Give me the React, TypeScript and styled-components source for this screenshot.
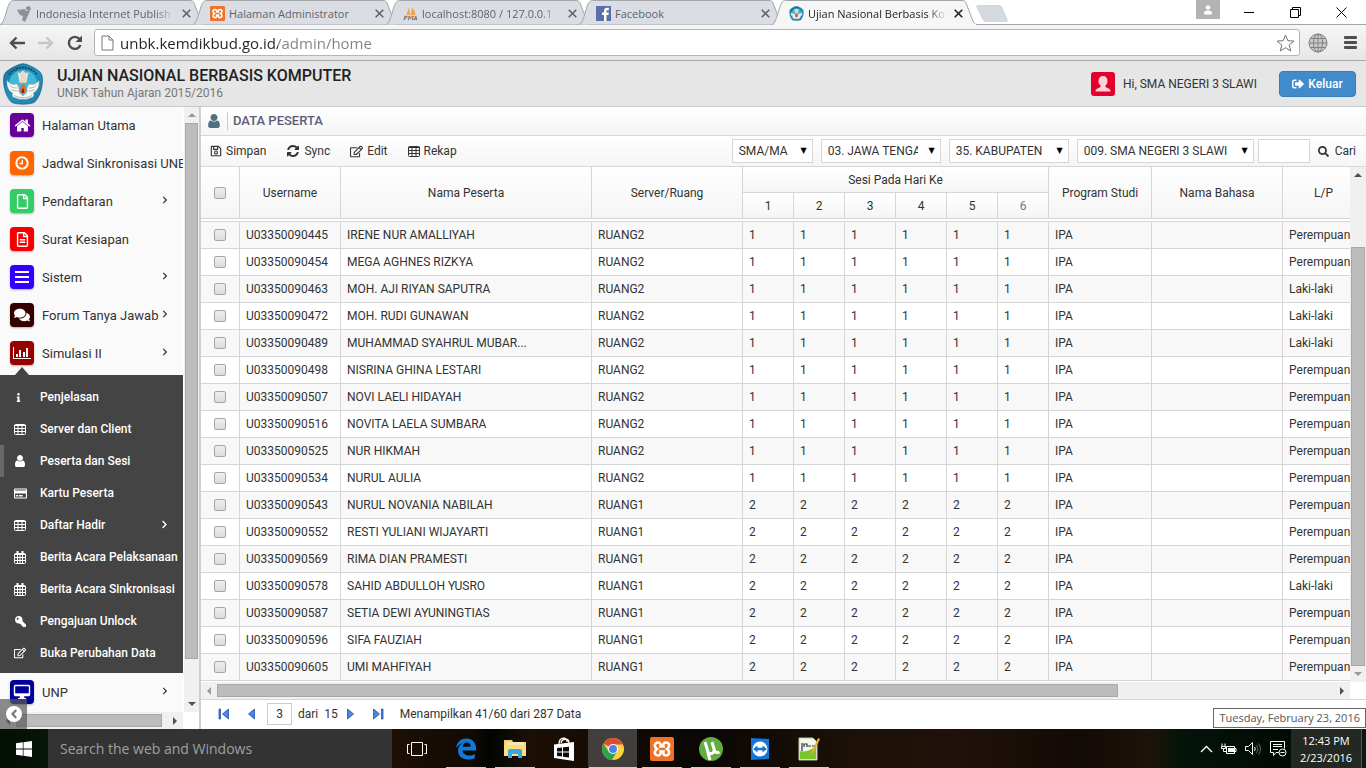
import React from "react";
import styled, { createGlobalStyle, css } from "styled-components";
import {
  FaAngleLeft,
  FaChevronRight,
  FaComments,
  FaInfo,
  FaKey,
  FaRegCreditCard,
  FaRegEdit,
  FaRegFile,
  FaRegFileAlt,
  FaRegSave,
  FaSearch,
  FaSignOutAlt,
} from "react-icons/fa";

const web = `Roboto, "Liberation Sans", sans-serif`;
const system = `"Open Sans", "Noto Sans", sans-serif`;
const line = "#d6d6d6";

const GlobalStyle = createGlobalStyle`
  *, *::before, *::after { box-sizing: border-box; }
  body { margin: 0; background: #fff; color: #333; font: 12px/16px ${web}; }
  button, input, select { font: inherit; color: inherit; margin: 0; padding: 0; border: 0; background: none; border-radius: 0; }
  button { cursor: pointer; }
  ul { list-style: none; margin: 0; padding: 0; }
  a { color: inherit; text-decoration: none; }
  h1, h2, p { margin: 0; }
  svg { display: block; flex: none; }
`;

/* ---------- glyphs ---------- */

type GlyphProps = { size?: number };

const HomeGlyph = ({ size = 16 }: GlyphProps) => (
  <svg width={size} height={size} viewBox="0 0 1792 1792" fill="currentColor">
    <path d="M1472 992v480q0 26-19 45t-45 19h-384v-384h-256v384h-384q-26 0-45-19t-19-45v-480q0-1 .5-3t.5-3l575-474 575 474q1 2 1 6zm223-69l-62 74q-8 9-21 11h-3q-13 0-21-7l-692-577-692 577q-12 8-24 7-13-2-21-11l-62-74q-8-10-7-23.5t11-21.5l719-599q32-26 76-26t76 26l244 204v-195q0-14 9-23t23-9h192q14 0 23 9t9 23v408l219 182q10 8 11 21.5t-7 23.5z" />
  </svg>
);

const UserGlyph = ({ size = 12 }: GlyphProps) => (
  <svg width={size} height={size} viewBox="128 128 1536 1536" fill="currentColor">
    <path d="M1536 1399q0 109-62.5 187t-150.5 78h-854q-88 0-150.5-78t-62.5-187q0-85 8.5-160.5t31.5-152 58.5-131 94-89 134.5-34.5q131 128 313 128t313-128q76 0 134.5 34.5t94 89 58.5 131 31.5 152 8.5 160.5zm-256-887q0 159-112.5 271.5t-271.5 112.5-271.5-112.5-112.5-271.5 112.5-271.5 271.5-112.5 271.5 112.5 112.5 271.5z" />
  </svg>
);

const RefreshGlyph = ({ size = 14 }: GlyphProps) => (
  <svg width={size} height={size} viewBox="0 0 1792 1792" fill="currentColor">
    <path d="M1639 1056q0 5-1 7-64 268-268 434.5t-478 166.5q-146 0-282.5-55t-243.5-157l-129 129q-19 19-45 19t-45-19-19-45v-448q0-26 19-45t45-19h448q26 0 45 19t19 45-19 45l-137 137q71 66 161 102t187 36q134 0 250-65t186-179q11-17 53-117 8-23 30-23h192q13 0 22.5 9.5t9.5 22.5zm25-800v448q0 26-19 45t-45 19h-448q-26 0-45-19t-19-45 19-45l138-138q-148-137-349-137-134 0-250 65t-186 179q-11 17-53 117-8 23-30 23h-199q-13 0-22.5-9.5t-9.5-22.5v-7q65-268 270-434.5t480-166.5q146 0 284 55.5t245 156.5l130-129q19-19 45-19t45 19 19 45z" />
  </svg>
);

const TableGlyph = () => (
  <svg width="12" height="11" viewBox="0 0 12 11" fill="none" stroke="currentColor">
    <rect x=".5" y=".5" width="11" height="10" rx="1" />
    <path d="M0 1.5h12M0 4.5h12M0 7.5h12M4 1v10M8 1v10" />
  </svg>
);

const CalendarGlyph = () => (
  <svg width="12" height="13" viewBox="0 0 12 13" fill="none" stroke="currentColor">
    <rect x=".5" y="2.5" width="11" height="10" rx="1" />
    <path d="M0 3.500h12M0 6.500h12M0 9.500h12M3.500 4v9M6 4v9M8.500 4v9" />
    <path d="M3.500 0v3M8.500 0v3" strokeWidth="2" />
  </svg>
);

const ClockGlyph = () => (
  <svg width="16" height="16" viewBox="0 0 16 16" fill="none" stroke="currentColor">
    <circle cx="8" cy="8" r="5.7" strokeWidth="2" />
    <path d="M8.3 5v3.500H5.500" strokeWidth="1.3" />
  </svg>
);

const BarsGlyph = () => (
  <svg width="16" height="12" viewBox="0 0 16 12" fill="currentColor">
    <path d="M1 0h14v2H1zM1 5h14v2H1zM1 10h14v2H1z" />
  </svg>
);

const ChartGlyph = () => (
  <svg width="18" height="14" viewBox="0 0 18 14" fill="currentColor">
    <path d="M0 1h1v11h17v1H0zM3 8h2v3H3zM6 4h2v7H6zM10 6h2v5h-2zM13 2h2v9h-2z" />
  </svg>
);

const DesktopGlyph = () => (
  <svg width="18" height="16" viewBox="0 0 18 16" fill="none" stroke="currentColor">
    <rect x="1.500" y="1.500" width="15" height="10" rx="1" strokeWidth="1.4" />
    <path d="M2 10.500h14" strokeWidth="2.4" />
    <path d="M7 12h4l.5 2H13v1H5v-1h1.500z" fill="currentColor" stroke="none" />
  </svg>
);

const MinistryLogo = ({ size }: { size: number }) => (
  <svg width={size} height={size} viewBox="0 0 42 42">
    <defs>
      <linearGradient id="crest" x1="0" y1="0" x2="1" y2="1">
        <stop offset="0" stopColor="#1c6f96" />
        <stop offset=".5" stopColor="#2391bd" />
        <stop offset="1" stopColor="#1c7fae" />
      </linearGradient>
    </defs>
    <path d="M21 .7c4 0 14 5 17.500 8.800 2.500 3.500 2.500 9 1 16-1.500 6-4 11.500-7.500 14-5 2.200-17 2.200-22 0-3.500-2.500-6-8-7.500-14-1.500-7-1.500-12.500 1-16C7 5.700 17 .7 21 .7z" fill="url(#crest)" stroke="#1a6488" strokeWidth=".7" />
    <path d="M7 11.500C11 6.500 16 4.500 21 4.500S31 6.500 35 11.500" fill="none" stroke="#123f58" strokeWidth="1.500" strokeDasharray="2 1" />
    <circle cx="21" cy="21" r="14" fill="#3fb9d8" />
    <path d="M15.500 9l2.500 1 3-2.500 3 2.500 2.500-1L24.500 20h-7z" fill="#f3efe7" stroke="#a99c8a" strokeWidth=".5" />
    <path d="M19 10v10M21 9v11M23 10v10" stroke="#c0a99a" strokeWidth=".6" />
    <path d="M5 17.500c3 4 6.500 4.500 10 3.500l2 4 0 4 4 4 4-4 0-4 2-4c3.500 1 7 .5 10-3.500.5 6-1.500 10.500-6 12.500 1 1 1 2 0 4-3 1-6 2.500-10 2.500s-7-1.500-10-2.500c-1-2-1-3 0-4-4.500-2-6.500-6.500-6-12.500z" fill="#fbf8f2" stroke="#8fa3a8" strokeWidth=".5" />
    <path d="M7.500 22c2 2.500 4.500 3 7.500 3M9.500 26.500c2 1.500 4 1.500 6 1.500M34.500 22c-2 2.500-4.500 3-7.500 3M32.500 26.500c-2 1.500-4 1.500-6 1.500M12 32.500c6 3 12 3 18 0M16 37c3-1 7-1 10 0" fill="none" stroke="#8d9a9a" strokeWidth=".7" />
    <path d="M21 21c3 3 3.500 6 2 9h-4c-1.500-3-1-6 2-9z" fill="#e96a1e" />
    <path d="M21 25c1 1.500 1.500 3 .5 5h-1.500c-.5-2 0-3.500 1-5z" fill="#7c1d12" />
  </svg>
);

const XamppLogo = ({ size }: { size: number }) => (
  <svg width={size} height={size} viewBox="0 0 24 24">
    <rect width="24" height="24" rx="2" fill="#ef7125" />
    <path d="M8 5.500c2.500 0 3 2 2.500 4h3C13 7.500 13.500 5.500 16 5.500s3.500 2 3 3.800c-.3 1.300-1 2-2 2.700 1 .7 1.700 1.400 2 2.700.5 1.800-.5 3.800-3 3.800s-3-2-2.500-4h-3c.5 2 0 4-2.500 4s-3.500-2-3-3.800c.3-1.300 1-2 2-2.700-1-.7-1.700-1.400-2-2.700-.5-1.800.5-3.800 3-3.800z" fill="none" stroke="#fff" strokeWidth="2.600" />
  </svg>
);

const Caret = ({ dir, color = "#505050" }: { dir: "up" | "down" | "left" | "right"; color?: string }) => {
  const d = { up: "M1 7l4-4 4 4z", down: "M1 3l4 4 4-4z", left: "M7 1L3 5l4 4z", right: "M3 1l4 4-4 4z" }[dir];
  return (
    <svg width="10" height="10" viewBox="0 0 10 10">
      <path d={d} fill={color} />
    </svg>
  );
};

/* ---------- browser chrome ---------- */

const Screen = styled.div`
  min-height: 100vh;
  display: flex;
  flex-direction: column;
  overflow: hidden;
`;

const TabStrip = styled.div`
  display: flex;
  height: 25px;
  padding: 0 2px 0 3px;
  background: #fff;
  border-bottom: 1px solid #a3a5a8;
  font: 11px/16px ${system};
`;

const Tabs = styled.ul`
  display: flex;
`;

const TabItem = styled.li<{ $active?: boolean }>`
  position: relative;
  width: 193px;
  height: 25px;
  display: flex;
  align-items: center;
  gap: 4px;
  padding: 2px 3px 0 14px;
  color: ${(p) => (p.$active ? "#222" : "#5f6368")};
  z-index: ${(p) => (p.$active ? 2 : 1)};
`;

const TabShape = styled.svg`
  position: absolute;
  left: -3px;
  top: 0;
  z-index: -1;
`;

const TabTitle = styled.a<{ $fade?: boolean }>`
  flex: 1;
  min-width: 0;
  overflow: hidden;
  white-space: nowrap;
  ${(p) => p.$fade && css`mask-image: linear-gradient(to right, #000 86%, transparent 100%);`}
`;

const TabClose = styled.button`
  width: 14px;
  height: 14px;
  display: grid;
  place-items: center;
  color: inherit;
`;

const NewTab = styled.button`
  margin: 5px 0 0 8px;
  width: 32px;
  height: 17px;
`;

const WindowControls = styled.div`
  margin-left: auto;
  display: flex;
`;

const ProfileButton = styled.button`
  width: 24px;
  height: 19px;
  display: grid;
  place-items: center;
  background: #b3b3b3;
  color: #fff;
  margin-right: 6px;
`;

const WindowButton = styled.button`
  width: 46px;
  height: 24px;
  display: grid;
  place-items: center;
`;

const AddressBar = styled.div`
  display: flex;
  align-items: center;
  height: 36px;
  padding: 0 8px 0 2px;
  background: linear-gradient(#f6f6f6, #e6e6e6);
  border-bottom: 1px solid #a9a9a9;
`;

const ToolButton = styled.button`
  width: 29px;
  height: 24px;
  display: grid;
  place-items: center;
`;

const Omnibox = styled.label`
  flex: 1;
  display: flex;
  align-items: center;
  gap: 6px;
  height: 27px;
  margin-left: 5px;
  padding: 0 4px 0 6px;
  background: #fff;
  border: 1px solid #b5b5b5;
  border-radius: 3px;
`;

const UrlInput = styled.input`
  flex: 1;
  min-width: 0;
  height: 24px;
  font: 15px/24px ${system};
  background: linear-gradient(to right, #222 158px, #808080 158px);
  background-clip: text;
  -webkit-text-fill-color: transparent;
  outline: none;
`;

const ChromeActions = styled.div`
  display: flex;
  align-items: center;
  gap: 16px;
  padding-left: 8px;
`;

const tabs = [
  { title: "Indonesia Internet Publish", icon: "publisher", fade: true },
  { title: "Halaman Administrator", icon: "xampp" },
  { title: "localhost:8080 / 127.0.0.1", icon: "pma", fade: true },
  { title: "Facebook", icon: "facebook" },
  { title: "Ujian Nasional Berbasis Ko", icon: "crest", active: true, fade: true },
];

const Favicon = ({ kind }: { kind: string }) => {
  if (kind === "xampp") return <XamppLogo size={15} />;
  if (kind === "crest") return <MinistryLogo size={15} />;
  if (kind === "facebook")
    return (
      <svg width="15" height="15" viewBox="0 0 15 15">
        <path d="M0 0h15v15H0z" fill="#5b6fa8" />
        <path d="M8 15V9H6V6.500h2V5c0-2.200 1.200-3.300 3.200-3.300h1.600v2.500h-1.300c-.8 0-1 .4-1 1.100v1.200h2.300L12.500 9h-2v6z" fill="#fff" />
      </svg>
    );
  if (kind === "pma")
    return (
      <svg width="15" height="16" viewBox="0 0 17 16">
        <path d="M4 9C5 6 6 3 6.500 1 8 4 8 7 7.500 9zM8.500 9C9.500 6 10 3 10 1c3 2 4 5 4 8zM1 10h15l-1 1.500H2z" fill="#f5a04c" />
        <path d="M1 15l1-4h2q1 1-.5 2H1.600M6 15l1-4 1.500 2.500L11 11v4M12 15l2.500-4 1 4M13 14h2.500" fill="none" stroke="#55628c" />
      </svg>
    );
  return (
    <svg width="15" height="16" viewBox="0 0 15 16" fill="#8e9094">
      <path d="M0 4l8-1 1 2 4 0-5 11-3-2 1-4-3-1zM9 1l4-1 1 4-3 1-2-2z" />
    </svg>
  );
};

const Browser = () => (
  <header>
    <TabStrip>
      <Tabs>
        {tabs.map((t) => (
          <TabItem key={t.title} $active={t.active}>
            <TabShape width="206" height="25" viewBox="0 0 206 25">
              <path
                d="M0 24.500C5 24.500 7 3 11 1.500 12 .5 13 .5 15 .5H189C192 .5 193 1 194 3L201 21C202 24 204 24.500 206 24.500"
                fill={t.active ? "#f6f6f6" : "#dadee4"}
                stroke="#a3a5a8"
              />
              {t.active && <path d="M2 24.500h202" stroke="#f6f6f6" strokeWidth="1.500" />}
            </TabShape>
            <Favicon kind={t.icon} />
            <TabTitle href="#" $fade={t.fade}>{t.title}</TabTitle>
            <TabClose aria-label="Close tab">
              <svg width="9" height="9" viewBox="0 0 9 9" stroke="currentColor" strokeWidth="1.600">
                <path d="M.7.7l7.600 7.600M8.300.7L.7 8.300" />
              </svg>
            </TabClose>
          </TabItem>
        ))}
      </Tabs>
      <NewTab aria-label="New tab">
        <svg width="32" height="17" viewBox="0 0 32 17">
          <path d="M1 .5h22q2 0 3 2l5 12q1 2-1 2H10q-2 0-3-2L1 2.500q-1-2 0-2z" fill="#d5dae1" stroke="#c3c7cd" strokeWidth=".6" />
        </svg>
      </NewTab>
      <WindowControls>
        <ProfileButton aria-label="Profile">
          <svg width="10" height="10" viewBox="0 0 10 10" fill="currentColor">
            <circle cx="5" cy="2.500" r="2.300" />
            <path d="M1 9.500V8q0-2.500 4-2.500T9 8v1.500z" />
          </svg>
        </ProfileButton>
        <WindowButton aria-label="Minimize">
          <svg width="10" height="10" stroke="#000"><path d="M0 5.500h10" /></svg>
        </WindowButton>
        <WindowButton aria-label="Restore">
          <svg width="11" height="11" fill="none" stroke="#000"><path d="M.5 2.500h8v8h-8zM2.500 2.500v-2h8v8h-2" /></svg>
        </WindowButton>
        <WindowButton aria-label="Close">
          <svg width="11" height="11" stroke="#000"><path d="M.5.5l10 10M10.500.5l-10 10" /></svg>
        </WindowButton>
      </WindowControls>
    </TabStrip>
    <AddressBar>
      <ToolButton aria-label="Back">
        <svg width="16" height="14" viewBox="0 0 16 14" fill="none" stroke="#4d4d4d" strokeWidth="2.400"><path d="M7.500 1.500L2 7l5.500 5.500M2 7h14" /></svg>
      </ToolButton>
      <ToolButton aria-label="Forward">
        <svg width="16" height="14" viewBox="0 0 16 14" fill="none" stroke="#c6c6c6" strokeWidth="2.400"><path d="M8.500 1.500L14 7l-5.500 5.500M14 7H0" /></svg>
      </ToolButton>
      <ToolButton aria-label="Reload">
        <svg width="16" height="16" viewBox="0 0 16 16" fill="none" stroke="#4d4d4d" strokeWidth="2.400"><path d="M13.500 10A6 6 0 1 1 12.500 4" /><path d="M15 .5v6.500H8.500z" fill="#4d4d4d" stroke="none" /></svg>
      </ToolButton>
      <Omnibox>
        <svg width="13" height="16" viewBox="0 0 13 16" fill="#fff" stroke="#777"><path d="M1 1h7l4 4v10H1zM8 1v4h4" /></svg>
        <UrlInput aria-label="Address" defaultValue="unbk.kemdikbud.go.id/admin/home" />
        <svg width="19" height="18" viewBox="0 0 19 18" fill="#fff" stroke="#707070"><path d="M9.500 1l2.300 5.700 6.200.4-4.800 3.900 1.600 6-5.300-3.300L4.200 17l1.600-6L1 7.100l6.200-.4z" /></svg>
      </Omnibox>
      <ChromeActions>
        <button aria-label="Extension">
          <svg width="20" height="20" viewBox="0 0 20 20" fill="#c9c9c9" stroke="#808080"><circle cx="10" cy="10" r="9" /><ellipse cx="10" cy="10" rx="4.500" ry="9" fill="none" /><path d="M10 1v18M1 10h18M2.500 5.500h15M2.500 14.500h15" /></svg>
        </button>
        <button aria-label="Menu">
          <svg width="14" height="14" fill="#4f4f4f"><rect y="0" width="13" height="3" rx="1" /><rect y="5" width="13" height="3" rx="1" /><rect y="10" width="13" height="3" rx="1" /></svg>
        </button>
      </ChromeActions>
    </AddressBar>
  </header>
);

/* ---------- site header ---------- */

const SiteHeader = styled.header`
  display: flex;
  align-items: center;
  height: 46px;
  padding: 0 10px 0 2px;
  background: #e6e6e6;
  border-bottom: 1px solid #c6c9ca;
`;

const Brand = styled.div`
  margin-left: 13px;
`;

const BrandTitle = styled.h1`
  font-size: 16px;
  line-height: 18px;
  font-weight: 500;
  color: #222;
`;

const BrandSub = styled.p`
  font-size: 12px;
  line-height: 16px;
  color: #777;
`;

const Account = styled.div`
  margin-left: auto;
  display: flex;
  align-items: center;
  gap: 8px;
`;

const Avatar = styled.span`
  width: 24px;
  height: 24px;
  display: grid;
  place-items: center;
  border-radius: 3px;
  background: #e4002b;
  color: #ffd3da;
`;

const Logout = styled.button`
  display: flex;
  align-items: center;
  justify-content: center;
  gap: 4px;
  width: 77px;
  height: 26px;
  margin-left: 14px;
  border-radius: 4px;
  border: 1px solid #357ebd;
  background: #428bca;
  color: #fff;
  font-weight: 500;
`;

/* ---------- sidebar ---------- */

const Workspace = styled.div`
  flex: 1;
  display: flex;
`;

const Sidebar = styled.aside`
  position: relative;
  width: 201px;
  flex: none;
  display: flex;
  flex-direction: column;
  background: #fff;
  border-right: 2px solid #cfcfcf;
`;

const SidebarBody = styled.div`
  flex: 1;
  display: flex;
`;

const Nav = styled.nav`
  width: 183px;
  overflow: hidden;
  background: #fafafa;
  font-size: 13px;
`;

const NavLink = styled.a`
  position: relative;
  display: flex;
  align-items: center;
  height: 38px;
  padding-left: 10px;
  white-space: nowrap;
`;

const NavIcon = styled.span<{ $color: string }>`
  flex: none;
  width: 24px;
  height: 24px;
  margin: 0 8px 2px 0;
  display: grid;
  place-items: center;
  border-radius: 4px;
  background: ${(p) => p.$color};
  box-shadow: 0 1px 2px rgba(0, 0, 0, 0.3);
  color: #fff;
`;

const Expand = styled.span<{ $light?: boolean }>`
  position: absolute;
  right: 14px;
  top: ${(p) => (p.$light ? 11 : 13)}px;
  color: ${(p) => (p.$light ? "#fff" : "#333")};
`;

const SubMenu = styled.ul`
  position: relative;
  margin: 2px 0 1px;
  padding: 6px 0 4px;
  background: #444;
  color: #fff;
  font-size: 12px;
  font-weight: 500;
`;

const SubPointer = styled.span`
  position: absolute;
  left: 15px;
  top: -8px;
  border: 7px solid transparent;
  border-top: 0;
  border-bottom: 8px solid #444;
`;

const SubLink = styled.a<{ $current?: boolean }>`
  position: relative;
  display: flex;
  align-items: center;
  height: 32px;
  padding-left: 10px;
  white-space: nowrap;
  border-left: 4px solid ${(p) => (p.$current ? "#696969" : "#444")};
`;

const SubIcon = styled.span`
  width: 26px;
  flex: none;
`;

const Mirror = styled.span`
  display: block;
  width: 12px;
  transform: scaleX(-1);
`;

const CollapseButton = styled.button`
  position: absolute;
  left: 0;
  bottom: 0;
  width: 27px;
  height: 30px;
  padding-left: 6px;
  background: rgba(90, 90, 90, 0.7);
`;

const CollapseDot = styled.span`
  width: 16px;
  height: 16px;
  border-radius: 50%;
  background: #fff;
  color: #777;
  display: grid;
  place-items: center;
`;

/* ---------- scroll bars ---------- */

const Track = styled.div<{ $vertical?: boolean }>`
  display: flex;
  background: #f0f0f0;
  ${(p) =>
    p.$vertical
      ? css`
          flex-direction: column;
          width: 16px;
          padding: 0 1px;
        `
      : css`
          height: 17px;
          padding: 2px 0;
        `}
`;

const Arrow = styled.span`
  flex: none;
  display: grid;
  place-items: center;
  min-width: 16px;
  min-height: 12px;
`;

const Thumb = styled.span<{ $grow: number }>`
  flex: ${(p) => p.$grow} 1 0;
  background: #bcbcbc;
  border: 1px solid #a8a8a8;
`;

const Rest = styled.span<{ $grow: number }>`
  flex: ${(p) => p.$grow} 1 0;
`;

const UprightArrow = styled(Arrow)`
  min-width: 12px;
  min-height: 16px;
`;

const SideTrack = styled(Track)`
  margin-left: 1px;
  width: 15px;
`;

const SideFoot = styled(Track)`
  width: 183px;
  height: 17px;
`;

type NavEntry = { label: string; color: string; icon: React.ReactNode; more?: boolean };

const mainNav: NavEntry[] = [
  { label: "Halaman Utama", color: "#660099", icon: <HomeGlyph size={17} /> },
  { label: "Jadwal Sinkronisasi UNBK", color: "#ff6600", icon: <ClockGlyph /> },
  { label: "Pendaftaran", color: "#33cc66", icon: <FaRegFile size={15} />, more: true },
  { label: "Surat Kesiapan", color: "#f40000", icon: <FaRegFileAlt size={15} /> },
  { label: "Sistem", color: "#3300ff", icon: <BarsGlyph />, more: true },
  { label: "Forum Tanya Jawab", color: "#330000", icon: <FaComments size={16} />, more: true },
  { label: "Simulasi II", color: "#990000", icon: <ChartGlyph />, more: true },
];

const subNav = [
  { label: "Penjelasan", icon: <FaInfo size={9} /> },
  { label: "Server dan Client", icon: <TableGlyph /> },
  { label: "Peserta dan Sesi", icon: <UserGlyph size={12} />, current: true },
  { label: "Kartu Peserta", icon: <FaRegCreditCard size={13} /> },
  { label: "Daftar Hadir", icon: <TableGlyph />, more: true },
  { label: "Berita Acara Pelaksanaan", icon: <CalendarGlyph /> },
  { label: "Berita Acara Sinkronisasi", icon: <CalendarGlyph /> },
  { label: "Pengajuan Unlock", icon: <Mirror><FaKey size={11} /></Mirror> },
  { label: "Buka Perubahan Data", icon: <FaRegEdit size={12} /> },
];

const NavItem = ({ label, color, icon, more }: NavEntry) => (
  <NavLink href="#">
    <NavIcon $color={color}>{icon}</NavIcon>
    {label}
    {more && <Expand><FaChevronRight size={8} /></Expand>}
  </NavLink>
);

const Side = () => (
  <Sidebar>
    <SidebarBody>
      <Nav>
        {mainNav.map((n) => <NavItem key={n.label} {...n} />)}
        <SubMenu>
          <SubPointer />
          {subNav.map((s) => (
            <li key={s.label}>
              <SubLink href="#" $current={s.current}>
                <SubIcon>{s.icon}</SubIcon>
                {s.label}
                {s.more && <Expand $light><FaChevronRight size={9} /></Expand>}
              </SubLink>
            </li>
          ))}
        </SubMenu>
        <NavItem label="UNP" color="#000099" icon={<DesktopGlyph />} more />
      </Nav>
      <SideTrack $vertical>
        <UprightArrow><Caret dir="up" color="#999" /></UprightArrow>
        <Thumb $grow={535} />
        <Rest $grow={37} />
        <UprightArrow><Caret dir="down" /></UprightArrow>
      </SideTrack>
    </SidebarBody>
    <SideFoot>
      <Arrow><Caret dir="left" /></Arrow>
      <Thumb $grow={146} />
      <Rest $grow={5} />
      <Arrow><Caret dir="right" /></Arrow>
    </SideFoot>
    <CollapseButton aria-label="Collapse menu">
      <CollapseDot><FaAngleLeft size={14} /></CollapseDot>
    </CollapseButton>
  </Sidebar>
);

/* ---------- data panel ---------- */

const Panel = styled.main`
  flex: 1;
  min-width: 0;
  display: flex;
  flex-direction: column;
`;

const PanelTitle = styled.div`
  display: flex;
  align-items: center;
  gap: 6px;
  height: 29px;
  padding-left: 6px;
  background: linear-gradient(#fff, #f5f5f5);
  border-bottom: 1px solid ${line};
  color: #4f7080;
`;

const PanelHeading = styled.h2`
  padding-left: 5px;
  border-left: 1px solid #ccc;
  font-size: 13px;
  line-height: 18px;
  font-weight: 500;
  color: #5d5d78;
`;

const ActionBar = styled.div`
  display: flex;
  align-items: center;
  height: 31px;
  padding: 0 10px 0 9px;
  background: linear-gradient(#fff, #f5f5f5);
  border-bottom: 1px solid ${line};
`;

const Actions = styled.div`
  display: flex;
  gap: 20px;
`;

const Action = styled.button`
  display: flex;
  align-items: center;
  gap: 4px;
`;

const Filters = styled.form`
  margin-left: auto;
  display: flex;
  align-items: center;
  gap: 8px;
`;

const SubmitAction = styled(Action)`
  gap: 6px;
`;

const SelectBox = styled.label<{ $width: number }>`
  position: relative;
  width: ${(p) => p.$width}px;
  height: 24px;
  background: #fff;
  border: 1px solid ${line};

  &::after {
    content: "▼";
    position: absolute;
    right: 5px;
    top: 3px;
    font: 8px/16px "DejaVu Sans", sans-serif;
    color: #000;
    pointer-events: none;
  }
`;

const Select = styled.select`
  appearance: none;
  width: calc(100% - 22px);
  height: 22px;
  padding: 0 0 0 6px;
  outline: none;
`;

const SearchInput = styled.input`
  width: 52px;
  height: 24px;
  margin-left: -4px;
  padding: 0 4px;
  background: #fff;
  border: 1px solid ${line};
`;

const GridArea = styled.div`
  flex: 1;
  display: flex;
`;

const GridMain = styled.div`
  flex: 1;
  min-width: 0;
  display: flex;
  flex-direction: column;
`;

const GridClip = styled.div`
  flex: 1;
  overflow: hidden;
`;

const Grid = styled.table`
  table-layout: fixed;
  width: 1182px;
  border-collapse: separate;
  border-spacing: 0;
`;

const Th = styled.th<{ $muted?: boolean }>`
  height: 26px;
  padding: 0;
  font-weight: 400;
  color: ${(p) => (p.$muted ? "#777" : "#333")};
  background: linear-gradient(#fff, #f5f5f5);
  border-right: 1px solid ${line};
  border-bottom: 1px solid ${line};
`;

const SpacerCell = styled.td`
  height: 3px;
  padding: 0;
  border-bottom: 1px solid ${line};
`;

const Tr = styled.tr`
  background: #fff;
  &:nth-child(even) {
    background: #f8f8f8;
  }
`;

const Td = styled.td<{ $center?: boolean }>`
  height: 27px;
  padding: ${(p) => (p.$center ? "0 0 1px" : "0 6px")};
  text-align: ${(p) => (p.$center ? "center" : "left")};
  border-right: 1px solid ${line};
  border-bottom: 1px solid ${line};
  overflow: hidden;
  white-space: nowrap;
  text-overflow: ellipsis;
`;

const Check = styled.input`
  appearance: none;
  display: block;
  width: 12px;
  height: 12px;
  margin: 0 auto;
  border: 1px solid #a6a6a6;
  border-radius: 2px;
  background: linear-gradient(#eee, #dcdcdc);
`;

const LpLabel = styled.span`
  display: block;
  width: 81px;
`;

const GridScroll = styled(Track)`
  margin-bottom: 17px;
`;

const Pager = styled.div`
  display: flex;
  align-items: center;
  height: 30px;
  padding: 0 0 1px 17px;
  border-top: 1px solid ${line};
  background: #fff;
`;

const PageButton = styled.button<{ $tight?: boolean }>`
  width: ${(p) => (p.$tight ? 21 : 28)}px;
  height: 20px;
  display: grid;
  place-items: center start;
`;

const PageInput = styled.input`
  width: 25px;
  height: 22px;
  margin-right: 6px;
  border: 1px solid #ccc;
  text-align: center;
`;

const PageText = styled.span`
  margin-right: 6px;
`;

const people: [string, string, string?][] = [
  ["445", "IRENE NUR AMALLIYAH"],
  ["454", "MEGA AGHNES RIZKYA"],
  ["463", "MOH. AJI RIYAN SAPUTRA", "L"],
  ["472", "MOH. RUDI GUNAWAN", "L"],
  ["489", "MUHAMMAD SYAHRUL MUBAR...", "L"],
  ["498", "NISRINA GHINA LESTARI"],
  ["507", "NOVI LAELI HIDAYAH"],
  ["516", "NOVITA LAELA SUMBARA"],
  ["525", "NUR HIKMAH"],
  ["534", "NURUL AULIA"],
  ["543", "NURUL NOVANIA NABILAH"],
  ["552", "RESTI YULIANI WIJAYARTI"],
  ["569", "RIMA DIAN PRAMESTI"],
  ["578", "SAHID ABDULLOH YUSRO", "L"],
  ["587", "SETIA DEWI AYUNINGTIAS"],
  ["596", "SIFA FAUZIAH"],
  ["605", "UMI MAHFIYAH"],
];

const columns = [39, 101, 251, 151, 51, 51, 51, 51, 51, 51, 103, 131, 100];
const days = [1, 2, 3, 4, 5, 6];

const filters = [
  { label: "Jenjang", value: "SMA/MA", width: 81 },
  { label: "Provinsi", value: "03. JAWA TENGAH", width: 120 },
  { label: "Kabupaten", value: "35. KABUPATEN", width: 120 },
  { label: "Sekolah", value: "009. SMA NEGERI 3 SLAWI", width: 177 },
];

const PageGlyph = ({ bar, back }: { bar?: boolean; back?: boolean }) => (
  <svg width="12" height="12" viewBox="0 0 12 12">
    <g transform={back ? "" : "matrix(-1 0 0 1 12 0)"} fill="#4c86e0" stroke="#2250a8" strokeWidth=".8">
      {bar && <path d="M1 1h1.500v10H1z" />}
      <path d={bar ? "M10.500 1v10L4.500 6z" : "M8.500 1v10L2.500 6z"} />
    </g>
  </svg>
);

const DataPanel = () => (
  <Panel>
    <PanelTitle>
      <UserGlyph size={14} />
      <PanelHeading>DATA PESERTA</PanelHeading>
    </PanelTitle>
    <ActionBar>
      <Actions>
        <Action><FaRegSave size={12} />Simpan</Action>
        <Action><RefreshGlyph />Sync</Action>
        <Action><FaRegEdit size={13} />Edit</Action>
        <Action><TableGlyph />Rekap</Action>
      </Actions>
      <Filters onSubmit={(e) => e.preventDefault()}>
        {filters.map((f) => (
          <SelectBox key={f.label} $width={f.width}>
            <Select aria-label={f.label}>
              <option>{f.value}</option>
            </Select>
          </SelectBox>
        ))}
        <SearchInput aria-label="Cari" />
        <SubmitAction type="submit"><FaSearch size={11} />Cari</SubmitAction>
      </Filters>
    </ActionBar>
    <GridArea>
      <GridMain>
        <GridClip>
          <Grid>
            <colgroup>
              {columns.map((w, i) => <col key={i} width={w} />)}
            </colgroup>
            <thead>
              <tr>
                <Th rowSpan={2}><Check type="checkbox" aria-label="Pilih semua" /></Th>
                <Th rowSpan={2}>Username</Th>
                <Th rowSpan={2}>Nama Peserta</Th>
                <Th rowSpan={2}>Server/Ruang</Th>
                <Th colSpan={6}>Sesi Pada Hari Ke</Th>
                <Th rowSpan={2}>Program Studi</Th>
                <Th rowSpan={2}>Nama Bahasa</Th>
                <Th rowSpan={2}>
                  <LpLabel>L/P</LpLabel>
                </Th>
              </tr>
              <tr>
                {days.map((d) => <Th key={d} $muted={d === 6}>{d}</Th>)}
              </tr>
            </thead>
            <tbody>
              <tr><SpacerCell colSpan={13} /></tr>
              {people.map(([id, name, sex], i) => (
                <Tr key={id}>
                  <Td $center><Check type="checkbox" aria-label={`Pilih ${name}`} /></Td>
                  <Td>{`U03350090${id}`}</Td>
                  <Td>{name}</Td>
                  <Td>{i < 10 ? "RUANG2" : "RUANG1"}</Td>
                  {days.map((d) => <Td key={d}>{i < 10 ? 1 : 2}</Td>)}
                  <Td>IPA</Td>
                  <Td />
                  <Td>{sex ? "Laki-laki" : "Perempuan"}</Td>
                </Tr>
              ))}
            </tbody>
          </Grid>
        </GridClip>
        <Track>
          <Arrow><Caret dir="left" color="#999" /></Arrow>
          <Thumb $grow={900} />
          <Rest $grow={216} />
          <Arrow><Caret dir="right" /></Arrow>
        </Track>
      </GridMain>
      <GridScroll $vertical>
        <UprightArrow><Caret dir="up" /></UprightArrow>
        <Rest $grow={64} />
        <Thumb $grow={418} />
        <UprightArrow><Caret dir="down" color="#999" /></UprightArrow>
      </GridScroll>
    </GridArea>
    <Pager>
      <PageButton aria-label="Halaman pertama"><PageGlyph bar back /></PageButton>
      <PageButton $tight aria-label="Halaman sebelumnya"><PageGlyph back /></PageButton>
      <PageInput aria-label="Halaman" defaultValue="3" />
      <PageText>dari</PageText>
      <PageText>15</PageText>
      <PageButton aria-label="Halaman berikutnya"><PageGlyph /></PageButton>
      <PageButton aria-label="Halaman terakhir"><PageGlyph bar /></PageButton>
      <span>Menampilkan 41/60 dari 287 Data</span>
    </Pager>
  </Panel>
);

/* ---------- taskbar ---------- */

const Taskbar = styled.footer`
  position: relative;
  display: flex;
  height: 40px;
  color: #fff;
  font-family: ${system};
  background: linear-gradient(to right, #031003 0, #06160a 48px, #1c0f04 400px, #120a04 470px, #020402 490px, #1c0f04 530px, #0a0705 700px, #1d1107 860px, #20120a 960px, #120a06 1080px, #1f1309 1150px, #04140a 1180px, #010a04 1290px, #0b1a0f 100%);
`;

const StartButton = styled.button`
  width: 48px;
  display: grid;
  place-items: center;
`;

const TaskSearch = styled.input`
  width: 344px;
  padding: 0 12px;
  background: #333;
  font-size: 14px;
  outline: none;
  &::placeholder {
    color: #a0a0a0;
    opacity: 1;
  }
`;

const TaskButton = styled.button<{ $state?: "open" | "active" }>`
  width: 49px;
  height: 40px;
  display: grid;
  place-items: center;
  ${(p) =>
    p.$state &&
    css`
      background: linear-gradient(#cfcfcf, #cfcfcf) center bottom / ${p.$state === "active" ? 48 : 40}px 2px no-repeat
        ${p.$state === "active" ? "#413e3c" : "transparent"};
    `}
`;

const Tray = styled.div`
  margin-left: auto;
  display: flex;
  align-items: center;
  gap: 8px;
`;

const TrayButton = styled.button`
  height: 40px;
  display: grid;
  place-items: center;
`;

const Clock = styled.button`
  width: 71px;
  height: 40px;
  margin: 0 4px 0 -4px;
  background: #232823;
  border-right: 1px solid #555;
  font-size: 11px;
  line-height: 17px;
  white-space: nowrap;
`;

const DateTip = styled.div`
  position: absolute;
  right: 0;
  bottom: 41px;
  height: 20px;
  padding: 0 5px;
  background: #fff;
  border: 1px solid #666;
  color: #555;
  font-size: 11px;
  line-height: 18px;
`;

const Desk = () => (
  <Taskbar>
    <StartButton aria-label="Start">
      <svg width="16" height="16" viewBox="0 0 16 16" fill="#fff"><path d="M0 2.200L6.800 1.300v6.300H0zM7.500 1.200L16 0v7.600H7.500zM0 8.400h6.800v6.300L0 13.800zM7.500 8.400H16V16l-8.500-1.200z" /></svg>
    </StartButton>
    <TaskSearch aria-label="Search" placeholder="Search the web and Windows" />
    <TaskButton aria-label="Task view">
      <svg width="20" height="14" fill="none" stroke="#fff"><path d="M4.500.5h11v13h-11zM2.500 2.500h-2v9h2M17.500 2.500h2v9h-2" /></svg>
    </TaskButton>
    <TaskButton aria-label="Edge" $state="open">
      <svg width="22" height="22" viewBox="0 0 22 22" fill="#1079d8"><path d="M1 10C2 3.500 6.500.5 11.500.5c6 0 9.500 4.500 9.500 9.500v2.500H7.500c.3 3.500 3.500 5 6.500 5 2.200 0 4.300-.7 5.800-1.600v4.200c-2 1-4.300 1.500-6.800 1.500-6 0-10-3.800-10-9 0-3.300 1.700-6 4.500-7.600C5 6 3 7.500 1 10zm6.700-1.200h8C15.700 6 14 4.500 11.800 4.500c-2.300 0-3.800 1.700-4.100 4.300z" /></svg>
    </TaskButton>
    <TaskButton aria-label="File Explorer" $state="open">
      <svg width="22" height="20" viewBox="0 0 22 20"><path d="M0 1h8l1 2h13v14H0z" fill="#f4cf62" /><path d="M2 3h18v3H2z" fill="#f9e7a6" /><path d="M0 6h22v11H0z" fill="#fbdf7c" /><path d="M4 19v-7q0-2 2-2h10q2 0 2 2v7h-4v-4H8v4z" fill="#3aa8e0" /></svg>
    </TaskButton>
    <TaskButton aria-label="Store">
      <svg width="22" height="24" viewBox="0 0 22 24"><path d="M6 7C6 0 14-1 14 5M8 6c1-5 8-5 8 0" fill="none" stroke="#fff" strokeWidth="1.300" /><path d="M1 7.500L21 5v19L1 21z" fill="#fff" /><path d="M4 11l5-.5v4H4zM10 10.300l6-.6v4.800h-6zM4 15.500h5v4l-5-.5zM10 15.500h6v4.900l-6-.7z" fill="#120c08" /></svg>
    </TaskButton>
    <TaskButton aria-label="Chrome" $state="active">
      <svg width="22" height="22" viewBox="0 0 22 22"><circle cx="11" cy="11" r="11" fill="#fdd23d" /><path d="M11 11L1.500 5.500A11 11 0 0 1 20.500 5.500V6.500H11z" fill="#e04a3a" /><path d="M1.500 5.500A11 11 0 0 0 10 22l5-8.500-8.500 0z" fill="#2fa24f" /><circle cx="11" cy="11" r="5" fill="#fff" /><circle cx="11" cy="11" r="4" fill="#4a83ee" /></svg>
    </TaskButton>
    <TaskButton aria-label="XAMPP" $state="open"><XamppLogo size={24} /></TaskButton>
    <TaskButton aria-label="uTorrent" $state="open">
      <svg width="24" height="24" viewBox="0 0 24 24"><circle cx="12" cy="12" r="12" fill="#62ac40" /><path d="M6 5l3 10q1.500 2.500 4.500 1.200Q16 15 15 12L13 5M15 12q1.500 5 5.500 3M8.500 14l2.500 9" fill="none" stroke="#fff" strokeWidth="3" /></svg>
    </TaskButton>
    <TaskButton aria-label="TeamViewer" $state="open">
      <svg width="20" height="24" viewBox="0 0 20 24"><path d="M1 1l18 1v20L1 23z" fill="#1675d8" /><circle cx="10" cy="12" r="7.500" fill="#fff" /><path d="M3 12l4.500-3.500v2.300h5V8.500L17 12l-4.500 3.500v-2.300h-5v2.300z" fill="#1675d8" /></svg>
    </TaskButton>
    <TaskButton aria-label="Notepad++" $state="open">
      <svg width="22" height="24" viewBox="0 0 22 24"><path d="M1 1h14l4 4v18H1z" fill="#f5f8ee" stroke="#b9c6a0" /><path d="M2 14q8 2 16-5v13H2z" fill="#79c52e" /><path d="M4 6v8M6 10V7h3v3M10 9h3M14 9h3" stroke="#333" fill="none" strokeWidth="1.200" /><path d="M20 1l2 1-6 13-3 3 1-4z" fill="#e2b32e" /></svg>
    </TaskButton>
    <Tray>
      <TrayButton aria-label="Show hidden icons">
        <svg width="13" height="8" fill="none" stroke="#fff" strokeWidth="1.300"><path d="M1 7l5.500-5.500L12 7" /></svg>
      </TrayButton>
      <TrayButton aria-label="Battery">
        <svg width="16" height="12" fill="none" stroke="#fff"><path d="M5.500 3.500h8v7h-8zM13.500 5.500h1.500v3h-1.500M1 .5v3M4 .5v3M.5 3.500h4v2h-4zM2.500 5.500v3h3" /><path d="M7 5h6v4H7z" fill="#fff" stroke="none" /></svg>
      </TrayButton>
      <TrayButton aria-label="Volume">
        <svg width="17" height="14" fill="none" stroke="#fff"><path d="M.5 4.500h3l4-4v12l-4-4h-3zM9.500 5q1.500 2 0 4" /><path d="M11.500 3q3 4 0 8M13.500 1.500q4 5.500 0 11" stroke="#666" /></svg>
      </TrayButton>
      <TrayButton aria-label="Notifications">
        <svg width="17" height="16" fill="none" stroke="#fff"><path d="M9 11.500H6l-2.500 3v-3h-3V.5h14v7M3 3.500h9M3 5.500h9M3 8.500h5" /><circle cx="12.500" cy="11.500" r="3.500" /><path d="M10.500 11.500h4" /></svg>
      </TrayButton>
      <Clock>12:43 PM<br />2/23/2016</Clock>
    </Tray>
    <DateTip role="tooltip">Tuesday, February 23, 2016</DateTip>
  </Taskbar>
);

export default function App() {
  return (
    <Screen>
      <GlobalStyle />
      <Browser />
      <SiteHeader>
        <MinistryLogo size={42} />
        <Brand>
          <BrandTitle>UJIAN NASIONAL BERBASIS KOMPUTER</BrandTitle>
          <BrandSub>UNBK Tahun Ajaran 2015/2016</BrandSub>
        </Brand>
        <Account>
          <Avatar>
            <svg width="16" height="18" viewBox="0 0 16 18" fill="currentColor"><path d="M8 1c3 0 4.500 2 4.500 5 0 2-.8 3.500-2 4.500v1.500l4 2q1 .6 1 2.500H.5q0-1.900 1-2.500l4-2v-1.500c-1.200-1-2-2.500-2-4.500 0-3 1.500-5 4.500-5z" /></svg>
          </Avatar>
          <span>Hi, SMA NEGERI 3 SLAWI</span>
          <Logout><FaSignOutAlt size={12} />Keluar</Logout>
        </Account>
      </SiteHeader>
      <Workspace>
        <Side />
        <DataPanel />
      </Workspace>
      <Desk />
    </Screen>
  );
}
